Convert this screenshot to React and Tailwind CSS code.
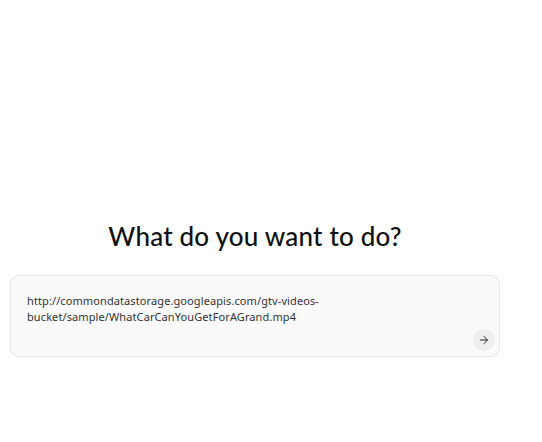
import React from 'react';
import { ArrowRight } from 'lucide-react';

export default function App() {
  return (
    <div className="w-[542px] h-[442px] bg-white" style={{ fontFamily: 'Lato, "Noto Sans", sans-serif' }}>
      <div className="w-[490px] ml-[10px] pt-[218px] flex flex-col">
        <h1 className="text-center text-[26px] leading-[36px] font-medium text-[#111] tracking-[0.2px]">
          What do you want to do?
        </h1>
        <div className="mt-[21px] h-[82px] rounded-[9px] border border-[#e5e5e5] bg-[#fafafa] flex flex-col px-4 pt-[17px] pb-[5px]">
          <p className="text-[11px] leading-[16px] text-[#333] w-[300px] tracking-[0.1px]" style={{ fontFamily: '"Noto Sans", sans-serif' }}>
            http://commondatastorage.googleapis.com/gtv-videos-bucket/sample/WhatCarCanYouGetForAGrand.mp4
          </p>
          <div className="mt-auto flex justify-end -mr-[12px]">
            <button className="w-[22px] h-[22px] rounded-full bg-[#efefef] flex items-center justify-center text-[#222]">
              <ArrowRight size={12} strokeWidth={2} />
            </button>
          </div>
        </div>
      </div>
    </div>
  );
}
